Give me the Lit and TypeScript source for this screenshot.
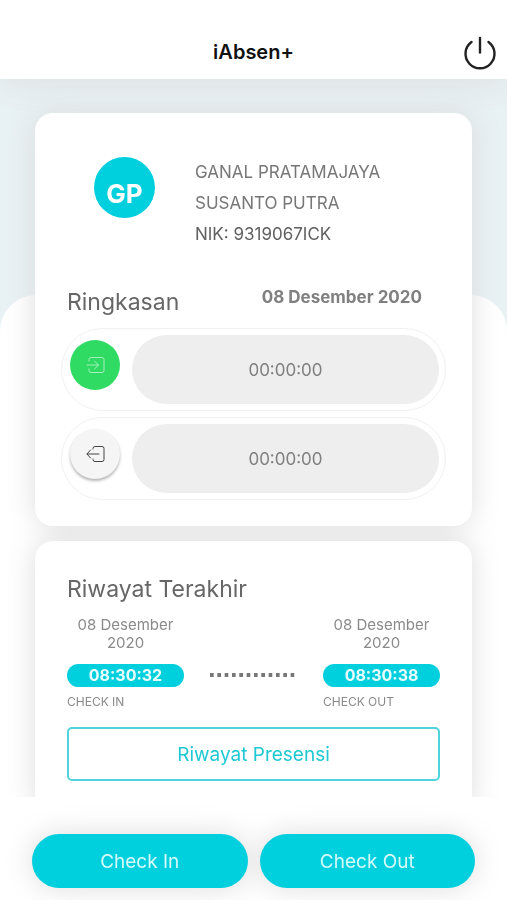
import { LitElement, html, css, svg } from "lit";
import { customElement, property } from "lit/decorators.js";

const enterIcon = svg`
  <path d="M3 5V3.500Q3 1.500 5 1.500H16Q18 1.500 18 3.500V14.500Q18 16.500 16 16.500H5Q3 16.500 3 14.500V13" />
  <path d="M1 9H12.500M8.500 5L12.500 9L8.500 13" />`;

const leaveIcon = svg`
  <path d="M7 4V3.500Q7 1.500 9 1.500H16Q18 1.500 18 3.500V14.500Q18 16.500 16 16.500H9Q7 16.500 7 14.500V14" />
  <path d="M13 9H1M4.500 5L1 9L4.500 13" />`;

@customElement("time-row")
class TimeRow extends LitElement {
  @property() kind: "in" | "out" = "in";
  @property() time = "";

  static styles = css`
    :host {
      display: flex;
      align-items: flex-start;
      gap: 12px;
      box-sizing: border-box;
      padding: 6px 6px 6px 8px;
      border: 1px solid #f1f1f1;
      border-radius: 42px;
    }
    .badge {
      flex: none;
      display: grid;
      place-items: center;
      width: 50px;
      height: 50px;
      margin-top: 5px;
      border-radius: 50%;
    }
    .in {
      background: #30db63;
      color: #a5f0bd;
    }
    .out {
      background: #f5f5f5;
      color: #444;
      box-shadow: 0 2px 3px rgba(0, 0, 0, 0.3);
    }
    .icon {
      width: 19px;
      height: 18px;
      fill: none;
      stroke: currentColor;
      stroke-width: 1;
      stroke-linecap: round;
      stroke-linejoin: round;
    }
    .value {
      flex: 1;
      height: 69px;
      line-height: 70px;
      border-radius: 35px;
      background: #eee;
      color: #808080;
      font-size: 17px;
      text-align: center;
    }
  `;

  render() {
    return html`
      <span class="badge ${this.kind}">
        <svg class="icon" viewBox="0 0 19 18" aria-hidden="true">
          ${this.kind === "in" ? enterIcon : leaveIcon}
        </svg>
      </span>
      <span class="value">${this.time}</span>
    `;
  }
}

@customElement("last-entry")
class LastEntry extends LitElement {
  @property() date = "";
  @property() time = "";
  @property() label = "";

  static styles = css`
    :host {
      display: flex;
      flex-direction: column;
      width: 117px;
      color: #8a8a8a;
    }
    .date {
      padding: 0 8px;
      font-size: 15px;
      line-height: 18px;
      text-align: center;
    }
    .time {
      margin-top: 12px;
      border-radius: 12px;
      background: #00cfdd;
      color: #e6fdfe;
      font-size: 16px;
      font-weight: 700;
      line-height: 23px;
      text-align: center;
    }
    .label {
      margin-top: 6px;
      font-size: 12px;
      line-height: 18px;
    }
  `;

  render() {
    return html`
      <span class="date">${this.date}</span>
      <span class="time">${this.time}</span>
      <span class="label">${this.label}</span>
    `;
  }
}

@customElement("app-root")
class AppRoot extends LitElement {
  static styles = css`
    :host {
      display: flex;
      flex-direction: column;
      height: 100vh;
      background: #e8f1f4;
      color: #666;
      font-family: Inter, "Liberation Sans", sans-serif;
    }
    button {
      font: inherit;
      cursor: pointer;
    }
    h1,
    h2,
    p {
      margin: 0;
      font-weight: 400;
    }
    .header {
      flex: none;
      display: grid;
      grid-template-columns: 1fr auto 1fr;
      align-items: center;
      padding: 32px 8px 7px;
      background: #fff;
      box-shadow: 0 0 36px #ddd;
    }
    .title {
      grid-column: 2;
      color: #111;
      font-size: 20px;
      font-weight: 600;
      line-height: 40px;
    }
    .power {
      justify-self: end;
      display: grid;
      padding: 0;
      border: 0;
      background: none;
      color: #222;
    }
    .power svg {
      width: 38px;
      height: 38px;
      fill: none;
      stroke: currentColor;
      stroke-width: 2.4;
      stroke-linecap: round;
    }
    .main {
      position: relative;
      z-index: 0;
      flex: 1;
      min-height: 0;
      overflow: auto;
      scrollbar-width: none;
    }
    .sheet {
      position: absolute;
      z-index: -1;
      inset: 216px 0 auto;
      height: 100%;
      border-radius: 36px 36px 0 0;
      background: #fff;
    }
    .cards {
      display: flex;
      flex-direction: column;
      gap: 15px;
      padding: 34px 35px;
      filter: drop-shadow(0 0 14px #ddd);
    }
    .card {
      border-radius: 18px;
      background: #fff;
    }
    .summary {
      padding: 44px 26px 26px;
    }
    .profile {
      display: flex;
      gap: 40px;
      padding: 0 33px;
    }
    .avatar {
      flex: none;
      box-sizing: border-box;
      width: 61px;
      height: 61px;
      padding-top: 12px;
      border-radius: 50%;
      background: #00cfdd;
      color: #fff;
      font-size: 26px;
      font-weight: 700;
      line-height: 49px;
      text-align: center;
    }
    .who {
      max-width: 200px;
      color: #777;
      font-size: 17px;
      line-height: 31px;
    }
    .nik {
      color: #606060;
    }
    .bar {
      display: flex;
      justify-content: space-between;
      align-items: flex-start;
      margin-top: 37px;
      padding: 0 24px 0 6px;
    }
    .heading {
      font-size: 23px;
      line-height: 30px;
    }
    .today {
      color: #808080;
      font-size: 17px;
      font-weight: 700;
      line-height: 20px;
    }
    .rows {
      display: grid;
      gap: 6px;
      margin-top: 11px;
    }
    .history {
      padding: 33px 32px 32px;
    }
    .entries {
      display: flex;
      justify-content: space-between;
      align-items: center;
      margin-top: 12px;
    }
    .dots {
      width: 88px;
      height: 4px;
      margin-top: 22px;
      background: linear-gradient(90deg, #777 4px, transparent 4px);
      background-size: calc(100% / 12) 100%;
    }
    .more {
      display: block;
      width: 100%;
      height: 54px;
      margin-top: 16px;
      border: 2px solid #4fd3dc;
      border-radius: 5px;
      background: #fff;
      color: #1fc8d4;
      font-size: 19px;
    }
    .footer {
      flex: none;
      overflow: hidden;
      background: #fff;
    }
    .actions {
      display: flex;
      gap: 12px;
      padding: 37px 32px 12px;
      filter: drop-shadow(0 0 14px #ddd);
    }
    .action {
      flex: 1;
      height: 54px;
      border: 0;
      border-radius: 27px;
      background: #00cfdd;
      color: #d5fafc;
      font-size: 19px;
    }
  `;

  render() {
    return html`
      <header class="header">
        <h1 class="title">iAbsen+</h1>
        <button class="power" aria-label="Keluar">
          <svg viewBox="0 0 38 38" aria-hidden="true">
            <path d="M10.500 9A14.500 14.500 0 1 0 27.500 9M19 5V19.500" />
          </svg>
        </button>
      </header>
      <main class="main">
        <div class="sheet"></div>
        <div class="cards">
          <section class="card summary">
            <div class="profile">
              <span class="avatar">GP</span>
              <div class="who">
                <p>GANAL PRATAMAJAYA SUSANTO PUTRA</p>
                <p class="nik">NIK: 9319067ICK</p>
              </div>
            </div>
            <div class="bar">
              <h2 class="heading">Ringkasan</h2>
              <span class="today">08 Desember 2020</span>
            </div>
            <div class="rows">
              <time-row kind="in" time="00:00:00"></time-row>
              <time-row kind="out" time="00:00:00"></time-row>
            </div>
          </section>
          <section class="card history">
            <h2 class="heading">Riwayat Terakhir</h2>
            <div class="entries">
              <last-entry date="08 Desember 2020" time="08:30:32" label="CHECK IN"></last-entry>
              <span class="dots"></span>
              <last-entry date="08 Desember 2020" time="08:30:38" label="CHECK OUT"></last-entry>
            </div>
            <button class="more">Riwayat Presensi</button>
          </section>
        </div>
      </main>
      <footer class="footer">
        <div class="actions">
          <button class="action">Check In</button>
          <button class="action">Check Out</button>
        </div>
      </footer>
    `;
  }
}
